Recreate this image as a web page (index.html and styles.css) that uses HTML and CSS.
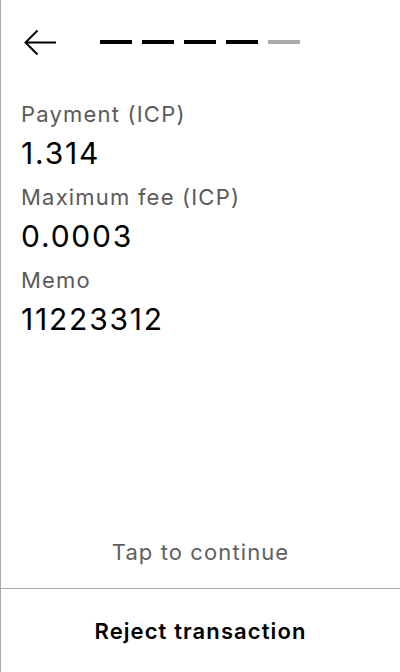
FILE: index.html
```html
<!DOCTYPE html>
<html lang="en">
<head>
<meta charset="utf-8">
<title>Review transaction</title>
<link rel="stylesheet" href="styles.css">
</head>
<body>
<div class="screen">
  <header class="header">
    <svg class="back" width="32" height="28" viewBox="0 0 32 28" aria-label="Back">
      <path d="M13.5 1.5 L1.5 13.5 L13.5 25.5 M1.5 13.5 H32" fill="none" stroke="#000" stroke-width="2"/>
    </svg>
    <div class="steps">
      <span class="step done"></span>
      <span class="step done"></span>
      <span class="step done"></span>
      <span class="step done"></span>
      <span class="step todo"></span>
    </div>
  </header>
  <main class="content">
    <div class="field">
      <div class="label">Payment (ICP)</div>
      <div class="value">1.314</div>
    </div>
    <div class="field">
      <div class="label">Maximum fee (ICP)</div>
      <div class="value">0.0003</div>
    </div>
    <div class="field">
      <div class="label">Memo</div>
      <div class="value">11223312</div>
    </div>
  </main>
  <div class="tap">Tap to continue</div>
  <footer class="footer">
    <button class="reject">Reject transaction</button>
  </footer>
</div>
</body>
</html>
```

FILE: styles.css
```css
html, body {
  margin: 0;
  padding: 0;
  background: #fff;
}

body {
  font-family: Inter, "Noto Sans", sans-serif;
  color: #000;
}

.screen {
  box-sizing: border-box;
  width: 400px;
  height: 672px;
  border-left: 1px solid #a9a9a9;
  display: flex;
  flex-direction: column;
}

.header {
  height: 86px;
  display: flex;
  align-items: center;
  padding-left: 23px;
}

.back {
  display: block;
}

.steps {
  display: flex;
  gap: 10px;
  margin-left: 44px;
  margin-top: -2px;
}

.step {
  display: block;
  width: 32px;
  height: 4px;
}

.step.done {
  background: #000;
}

.step.todo {
  background: #aaa;
}

.content {
  flex: 1;
  padding: 12px 20px 0 20px;
}

.field {
  margin-bottom: 5px;
}

.label {
  font-size: 22px;
  line-height: 32px;
  letter-spacing: 1.2px;
  color: #5a5a5a;
}

.value {
  font-size: 30px;
  line-height: 46px;
  letter-spacing: 1.8px;
  color: #000;
}

.tap {
  text-align: center;
  font-size: 22px;
  line-height: 28px;
  letter-spacing: 1.1px;
  color: #5f5f5f;
  padding-bottom: 22px;
}

.footer {
  height: 84px;
  box-sizing: border-box;
  border-top: 1px solid #a9a9a9;
  display: flex;
}

.reject {
  flex: 1;
  border: 0;
  background: transparent;
  font-family: Inter, "Noto Sans", sans-serif;
  font-size: 22px;
  font-weight: 600;
  line-height: 1;
  letter-spacing: 1.1px;
  color: #000;
  padding: 0;
}
```
